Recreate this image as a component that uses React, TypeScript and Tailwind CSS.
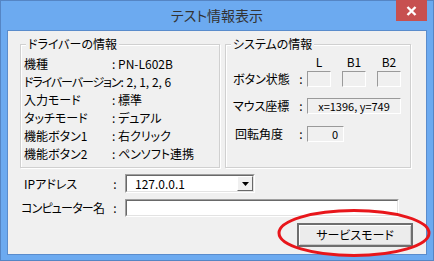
import React from "react";

const font = "font-['Noto_Sans_CJK_JP','Noto_Sans',sans-serif] [font-feature-settings:'palt']";

function Sunken({ className = "", children }: { className?: string; children?: React.ReactNode }) {
  return (
    <div
      className={`border border-t-[#9a9a9a] border-l-[#9a9a9a] border-b-white border-r-white ${className}`}
    >
      {children}
    </div>
  );
}

function Group({
  title,
  className = "",
  children,
}: {
  title: string;
  className?: string;
  children?: React.ReactNode;
}) {
  return (
    <div
      className={`relative border border-[#d0d0d0] shadow-[inset_1px_1px_0_#ffffff,1px_1px_0_#ffffff] ${className}`}
    >
      <span className="absolute -top-[8px] left-[5px] bg-[#f0f0f0] px-[2px] text-[12px] leading-[14px] text-black">
        {title}
      </span>
      {children}
    </div>
  );
}

export default function App() {
  const driverRows: [string, string, string][] = [
    ["機種", "PN-L602B", ""],
    ["ドライバーバージョン", "2, 1, 2, 6", "tracking-[-1.1px]"],
    ["入力モード", "標準", ""],
    ["タッチモード", "デュアル", ""],
    ["機能ボタン1", "右クリック", ""],
    ["機能ボタン2", "ペンソフト連携", ""],
  ];

  return (
    <div className={`${font} relative w-[434px] h-[261px] bg-[#6caaf0] border border-[#5585c4] flex flex-col px-[6px] pb-[5px]`}>
      {/* title bar */}
      <div className="h-[29px] grid grid-cols-[1fr_auto_1fr] items-start">
        <div />
        <div className="pt-[5px] text-[14px] leading-[18px] text-[#333333]">テスト情報表示</div>
        <div className="flex justify-end">
          <div className="-mt-[1px] w-[31px] h-[21px] bg-[#c75050] flex items-center justify-center">
            <svg width="11" height="10" viewBox="0 0 11 10">
              <path d="M1.5 1 L9.5 9 M9.5 1 L1.5 9" stroke="#ffffff" strokeWidth="2.4" />
            </svg>
          </div>
        </div>
      </div>

      {/* client area */}
      <div className="flex-1 border border-[#5a8ccc] bg-[#f0f0f0] flex flex-col pt-[13px] text-[12px] text-black">
        <div className="flex pl-[12px] gap-[5px]">
          {/* driver info */}
          <Group title="ドライバーの情報" className="w-[200px] h-[124px]">
            <div className="pt-[10px] pl-[3px] flex flex-col leading-[18px]">
              {driverRows.map(([k, v, t]) => (
                <div key={k} className="flex whitespace-nowrap">
                  <div className={`min-w-[88px] ${t}`}>{k}</div>
                  <div>: {v}</div>
                </div>
              ))}
            </div>
          </Group>

          {/* system info */}
          <Group title="システムの情報" className="w-[186px] h-[124px]">
            <div className="pt-[10px] pl-[7px] flex flex-col">
              <div className="flex h-[14px] leading-[14px] text-[12px]">
                <div className="w-[74px]" />
                <div className="flex gap-[11px]">
                  <div className="w-[24px] text-center">L</div>
                  <div className="w-[24px] text-center">B1</div>
                  <div className="w-[24px] text-center">B2</div>
                </div>
              </div>
              <div className="mt-[2px] flex items-center h-[16px]">
                <div className="w-[66px] whitespace-nowrap">ボタン状態</div>
                <div className="w-[4px] text-center">:</div>
                <div className="ml-[4px] flex gap-[11px]">
                  <Sunken className="w-[24px] h-[16px]" />
                  <Sunken className="w-[24px] h-[16px]" />
                  <Sunken className="w-[24px] h-[16px]" />
                </div>
              </div>
              <div className="mt-[11px] flex items-center h-[16px]">
                <div className="w-[66px] whitespace-nowrap">マウス座標</div>
                <div className="w-[4px] text-center">:</div>
                <Sunken className="ml-[4px] w-[94px] h-[16px] flex items-center justify-center text-[11px] leading-[14px]">
                  x=1396, y=749
                </Sunken>
              </div>
              <div className="mt-[12px] flex items-center h-[16px]">
                <div className="w-[66px] pl-[2px] whitespace-nowrap">回転角度</div>
                <div className="w-[4px] text-center">:</div>
                <Sunken className="ml-[4px] w-[37px] h-[16px] flex items-center justify-end pr-[5px] text-[11px] leading-[14px]">
                  0
                </Sunken>
              </div>
            </div>
          </Group>
        </div>

        {/* IP row */}
        <div className="mt-[6px] flex items-center h-[19px] pl-[16px]">
          <div className="w-[88px] whitespace-nowrap">IPアドレス</div>
          <div className="w-[6px] text-center">:</div>
          <div className="ml-[7px] w-[130px] h-[19px] border border-t-[#a0a0a0] border-l-[#a0a0a0] border-b-white border-r-white">
            <div className="h-full border border-t-[#696969] border-l-[#696969] border-b-[#e3e3e3] border-r-[#e3e3e3] bg-white flex items-center">
              <div className="flex-1 pl-[8px] text-[12px] leading-[14px]">127.0.0.1</div>
              <div className="w-[16px] h-[15px] bg-[#f0f0f0] border border-t-white border-l-white border-b-[#696969] border-r-[#696969] flex items-center justify-center">
                <svg width="7" height="4" viewBox="0 0 7 4">
                  <path d="M0 0 H7 L3.5 4 Z" fill="#000000" />
                </svg>
              </div>
            </div>
          </div>
        </div>

        {/* computer name row */}
        <div className="mt-[6px] flex items-center h-[18px] pl-[13px]">
          <div className="w-[91px] whitespace-nowrap tracking-[-0.8px]">コンピューター名</div>
          <div className="w-[6px] text-center">:</div>
          <div className="ml-[7px] w-[274px] h-[18px] border border-t-[#a0a0a0] border-l-[#a0a0a0] border-b-white border-r-white">
            <div className="h-full border border-t-[#696969] border-l-[#696969] border-b-[#e3e3e3] border-r-[#e3e3e3] bg-white" />
          </div>
        </div>

        {/* button row */}
        <div className="mt-[6px] flex justify-end pr-[13px]">
          <button className="w-[116px] h-[24px] border-2 border-[#6e6e6e] bg-[#ececec] shadow-[inset_1px_1px_0_#ffffff,inset_-1px_-1px_0_#c8c8c8] text-[12px] leading-[14px] text-black">
            サービスモード
          </button>
        </div>
      </div>

      {/* red annotation ellipse */}
      <svg className="absolute left-[275px] top-[207px]" width="158" height="52" viewBox="0 0 158 52">
        <ellipse cx="78" cy="25" rx="75" ry="22.5" fill="none" stroke="#e8161b" strokeWidth="3" />
      </svg>
    </div>
  );
}
